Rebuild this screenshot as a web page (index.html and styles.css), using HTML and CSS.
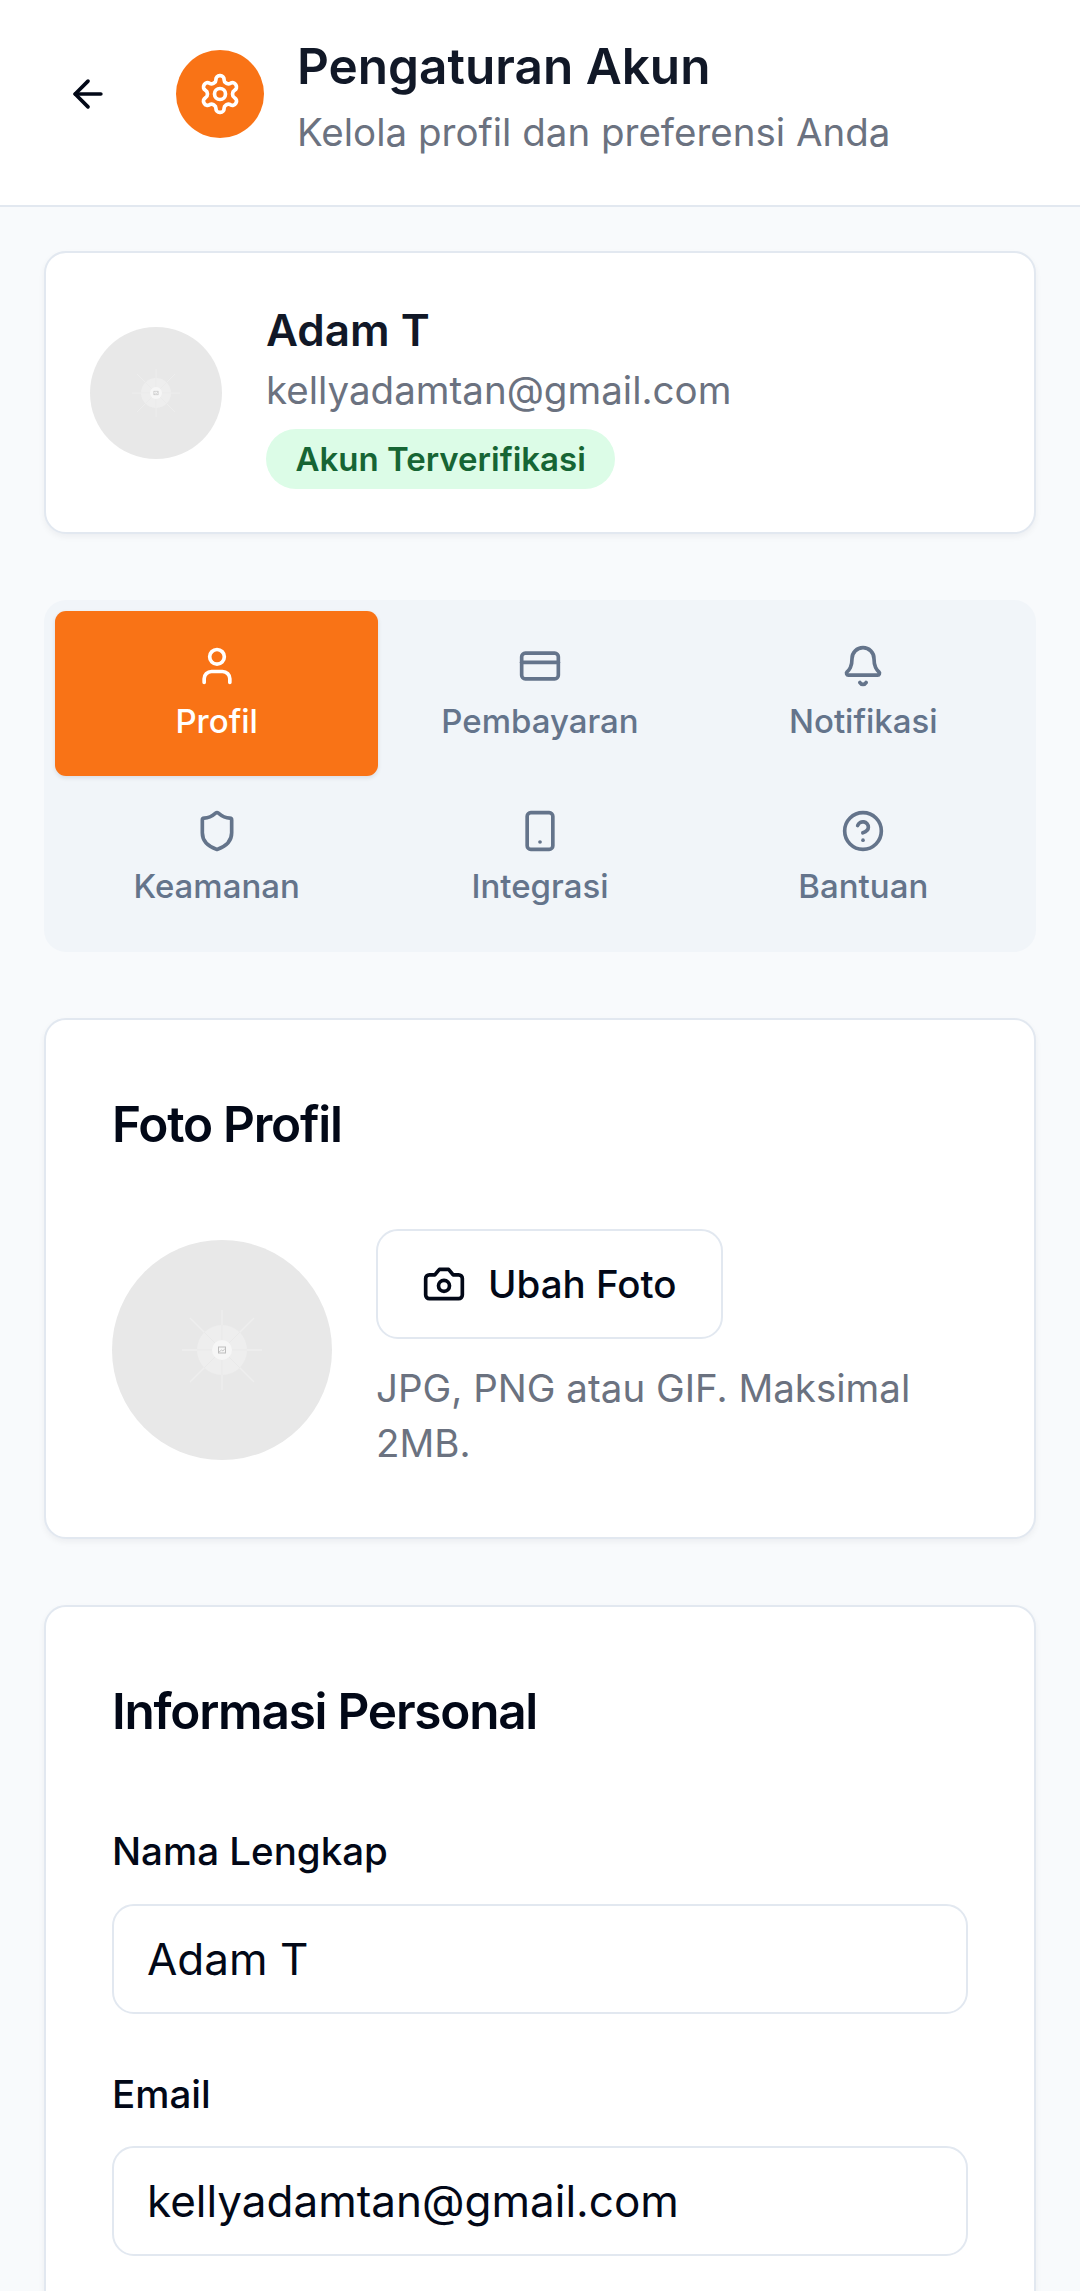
FILE: index.html
```html
<!DOCTYPE html>
<html lang="id">
<head>
<meta charset="utf-8">
<title>Pengaturan Akun</title>
<link rel="stylesheet" href="styles.css">
</head>
<body>
<svg class="defs" width="0" height="0" aria-hidden="true">
  <symbol id="placeholder" viewBox="0 0 220 220">
    <g stroke="#eeeeee" stroke-width="1.3">
      <path d="M110 70V150M70 110H150M78 78L142 142M78 142L142 78"/>
    </g>
    <circle cx="110" cy="110" r="25" fill="#eeeeee"/>
    <g stroke="#e9e9e9" stroke-width="1">
      <path d="M110 85V135M85 110H135M92 92L128 128M92 128L128 92"/>
    </g>
    <circle cx="110" cy="110" r="10" fill="#f6f6f6"/>
    <rect x="106.500" y="107" width="7" height="6" fill="none" stroke="#bdbdbd" stroke-width="1"/>
    <path d="M107 112l2.500-2 1.500 1 2-2.500" fill="none" stroke="#bdbdbd" stroke-width=".8"/>
  </symbol>
</svg>

<header class="topbar">
  <button class="back" type="button" aria-label="Kembali">
    <svg class="icon" viewBox="0 0 24 24"><path d="m12 19-7-7 7-7"/><path d="M19 12H5"/></svg>
  </button>
  <div class="badge-icon">
    <svg class="icon" viewBox="0 0 24 24"><path d="M12.220 2h-.44a2 2 0 0 0-2 2v.18a2 2 0 0 1-1 1.730l-.43.25a2 2 0 0 1-2 0l-.15-.08a2 2 0 0 0-2.730.73l-.22.38a2 2 0 0 0 .73 2.730l.15.1a2 2 0 0 1 1 1.720v.51a2 2 0 0 1-1 1.740l-.15.09a2 2 0 0 0-.73 2.730l.22.38a2 2 0 0 0 2.730.73l.15-.08a2 2 0 0 1 2 0l.43.25a2 2 0 0 1 1 1.730V20a2 2 0 0 0 2 2h.44a2 2 0 0 0 2-2v-.18a2 2 0 0 1 1-1.730l.43-.25a2 2 0 0 1 2 0l.15.08a2 2 0 0 0 2.730-.73l.22-.39a2 2 0 0 0-.73-2.730l-.15-.08a2 2 0 0 1-1-1.740v-.5a2 2 0 0 1 1-1.740l.15-.09a2 2 0 0 0 .73-2.730l-.22-.38a2 2 0 0 0-2.730-.73l-.15.08a2 2 0 0 1-2 0l-.43-.25a2 2 0 0 1-1-1.730V4a2 2 0 0 0-2-2z"/><circle cx="12" cy="12" r="3"/></svg>
  </div>
  <div class="topbar-text">
    <h1>Pengaturan Akun</h1>
    <p>Kelola profil dan preferensi Anda</p>
  </div>
</header>

<main class="content">
  <section class="card summary">
    <svg class="avatar small"><use href="#placeholder"/></svg>
    <div class="summary-text">
      <h2>Adam T</h2>
      <p>kellyadamtan@gmail.com</p>
      <span class="pill">Akun Terverifikasi</span>
    </div>
  </section>

  <nav class="tabs">
    <a class="tab active">
      <svg class="icon" viewBox="0 0 24 24"><path d="M19 21v-2a4 4 0 0 0-4-4H9a4 4 0 0 0-4 4v2"/><circle cx="12" cy="7" r="4"/></svg>
      <span>Profil</span>
    </a>
    <a class="tab">
      <svg class="icon" viewBox="0 0 24 24"><rect width="20" height="14" x="2" y="5" rx="2"/><line x1="2" x2="22" y1="10" y2="10"/></svg>
      <span>Pembayaran</span>
    </a>
    <a class="tab">
      <svg class="icon" viewBox="0 0 24 24"><path d="M10.268 21a2 2 0 0 0 3.464 0"/><path d="M3.262 15.326A1 1 0 0 0 4 17h16a1 1 0 0 0 .74-1.673C19.410 13.956 18 12.499 18 8A6 6 0 0 0 6 8c0 4.499-1.411 5.956-2.738 7.326"/></svg>
      <span>Notifikasi</span>
    </a>
    <a class="tab">
      <svg class="icon" viewBox="0 0 24 24"><path d="M20 13c0 5-3.500 7.500-7.660 8.950a1 1 0 0 1-.67-.01C7.500 20.500 4 18 4 13V6a1 1 0 0 1 1-1c2 0 4.500-1.200 6.240-2.720a1.170 1.170 0 0 1 1.520 0C14.510 3.810 17 5 19 5a1 1 0 0 1 1 1z"/></svg>
      <span>Keamanan</span>
    </a>
    <a class="tab">
      <svg class="icon" viewBox="0 0 24 24"><rect width="14" height="20" x="5" y="2" rx="2"/><path d="M12 18h.01"/></svg>
      <span>Integrasi</span>
    </a>
    <a class="tab">
      <svg class="icon" viewBox="0 0 24 24"><circle cx="12" cy="12" r="10"/><path d="M9.090 9a3 3 0 0 1 5.830 1c0 2-3 3-3 3"/><path d="M12 17h.01"/></svg>
      <span>Bantuan</span>
    </a>
  </nav>

  <section class="card panel">
    <h3>Foto Profil</h3>
    <div class="photo-row">
      <svg class="avatar large"><use href="#placeholder"/></svg>
      <div class="photo-side">
        <button class="upload" type="button">
          <svg class="icon" viewBox="0 0 24 24"><path d="M14.500 4h-5L7 7H4a2 2 0 0 0-2 2v9a2 2 0 0 0 2 2h16a2 2 0 0 0 2-2V9a2 2 0 0 0-2-2h-3l-2.500-3z"/><circle cx="12" cy="13" r="3"/></svg>
          <span>Ubah Foto</span>
        </button>
        <p class="hint">JPG, PNG atau GIF. Maksimal 2MB.</p>
      </div>
    </div>
  </section>

  <section class="card panel">
    <h3 class="form-title">Informasi Personal</h3>
    <div class="field">
      <label for="nama">Nama Lengkap</label>
      <input id="nama" type="text" value="Adam T">
    </div>
    <div class="field">
      <label for="email">Email</label>
      <input id="email" type="email" value="kellyadamtan@gmail.com">
    </div>
  </section>
</main>
</body>
</html>
```
FILE: styles.css
```css
* { box-sizing: border-box; }

html, body {
  margin: 0;
  height: 2291px;
  overflow: hidden;
}

body {
  background: #f8fafc;
  font-family: Inter, "Noto Sans", sans-serif;
  color: #020817;
}

h1, h2, h3, p { margin: 0; font-weight: inherit; }

.defs { display: block; height: 0; }

.icon {
  width: 44px;
  height: 44px;
  flex: none;
  fill: none;
  stroke: currentColor;
  stroke-width: 2;
  stroke-linecap: round;
  stroke-linejoin: round;
  display: block;
}

.topbar {
  display: flex;
  align-items: center;
  padding: 28px 44px 45px;
  background: #fff;
  border-bottom: 2px solid #e2e8f0;
}

.back {
  width: 88px;
  height: 88px;
  padding: 22px;
  margin-right: 44px;
  border: 0;
  background: none;
  color: #020817;
}

.badge-icon {
  width: 88px;
  height: 88px;
  margin-right: 33px;
  border-radius: 50%;
  background: #f97316;
  color: #fff;
  display: flex;
  align-items: center;
  justify-content: center;
}

.topbar-text h1 {
  font-size: 49.5px;
  line-height: 77px;
  font-weight: 600;
  color: #111827;
}

.topbar-text p {
  font-size: 38.5px;
  line-height: 55px;
  color: #6b7280;
}

.content {
  padding: 44px;
  display: flex;
  flex-direction: column;
  gap: 66px;
}

.card {
  background: #fff;
  border: 2px solid #e2e8f0;
  border-radius: 22px;
  box-shadow: 0 3px 6px rgba(15, 23, 42, .05);
}

.summary {
  display: flex;
  align-items: center;
  gap: 44px;
  padding: 43.5px 44px;
}

.avatar { display: block; flex: none; border-radius: 50%; background: #e8e8e8; }
.avatar.small { width: 132px; height: 132px; }
.avatar.large { width: 220px; height: 220px; }

.summary-text h2 {
  font-size: 44px;
  line-height: 66px;
  font-weight: 600;
  color: #111827;
}

.summary-text p {
  font-size: 38.5px;
  line-height: 55px;
  color: #6b7280;
}

.pill {
  display: inline-block;
  margin-top: 11px;
  padding: 8px 29.5px;
  border-radius: 30px;
  background: #dcfce7;
  color: #166534;
  font-size: 33px;
  line-height: 44px;
  font-weight: 600;
}

.tabs {
  display: grid;
  grid-template-columns: repeat(3, 1fr);
  padding: 11px;
  border-radius: 22px;
  background: #f1f5f9;
}

.tab {
  display: flex;
  flex-direction: column;
  align-items: center;
  gap: 11px;
  padding: 33px 16px;
  border-radius: 11px;
  color: #64748b;
  font-size: 33px;
  line-height: 44px;
  font-weight: 500;
}

.tab.active {
  background: #f97316;
  color: #fff;
  box-shadow: 0 2px 4px rgba(15, 23, 42, .1);
}

.panel { padding: 66px; }

.panel h3 {
  font-size: 49.5px;
  line-height: 77px;
  font-weight: 600;
  letter-spacing: -1.24px;
  margin-bottom: 66px;
}

.panel h3.form-title { margin-bottom: 74px; }

.photo-row {
  display: flex;
  align-items: center;
  gap: 44px;
}

.upload {
  display: flex;
  align-items: center;
  gap: 22px;
  height: 110px;
  padding: 0 44px;
  border: 2px solid #e2e8f0;
  border-radius: 22px;
  background: #fff;
  color: #020817;
  font-family: inherit;
  font-size: 38.5px;
  font-weight: 500;
  margin-bottom: 22px;
}

.hint {
  font-size: 38.5px;
  line-height: 55px;
  color: #6b7280;
}

.field + .field { margin-top: 53px; }

.field label {
  display: block;
  font-size: 38.5px;
  line-height: 55px;
  font-weight: 500;
  margin-bottom: 24.5px;
}

.field input {
  display: block;
  width: 100%;
  height: 110px;
  padding: 0 33px;
  border: 2px solid #e2e8f0;
  border-radius: 22px;
  background: #fff;
  color: #020817;
  font-family: inherit;
  font-size: 44px;
}
```
